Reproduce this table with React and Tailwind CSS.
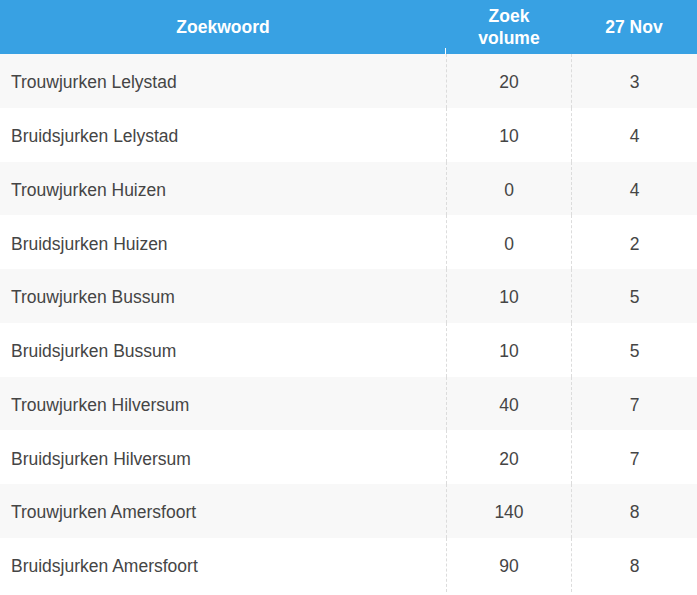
const ROWS = [
  ['Trouwjurken Lelystad', 20, 3],
  ['Bruidsjurken Lelystad', 10, 4],
  ['Trouwjurken Huizen', 0, 4],
  ['Bruidsjurken Huizen', 0, 2],
  ['Trouwjurken Bussum', 10, 5],
  ['Bruidsjurken Bussum', 10, 5],
  ['Trouwjurken Hilversum', 40, 7],
  ['Bruidsjurken Hilversum', 20, 7],
  ['Trouwjurken Amersfoort', 140, 8],
  ['Bruidsjurken Amersfoort', 90, 8],
];

export default function App() {
  return (
    <div className="w-[697px] h-[595px] bg-white font-['Liberation_Sans',Arial,sans-serif]">
      {/* header */}
      <div className="grid grid-cols-[446px_125px_1fr] h-[54px] bg-[#38a1e3] text-white font-bold text-[17.5px] leading-[22px]">
        <div className="relative flex items-center justify-center">
          Zoekwoord
          <span className="absolute right-0 bottom-0 w-px h-[6px] bg-white" />
        </div>
        <div className="flex items-center justify-center text-center pl-px">
          Zoek
          <br />
          volume
        </div>
        <div className="flex items-center justify-center">27 Nov</div>
      </div>

      {/* body */}
      {ROWS.map(([kw, vol, day], i) => (
        <div
          key={kw}
          className={`grid grid-cols-[446px_125px_1fr] h-[53.75px] text-[17.5px] text-[#454545] ${
            i % 2 === 0 ? 'bg-[#f8f8f8]' : 'bg-white'
          }`}
        >
          <div className="flex items-center pl-[11px] pt-[3px]">{kw}</div>
          <div className="flex items-center justify-center pt-[3px] border-l border-dashed border-[#dcdcdc]">
            {vol}
          </div>
          <div className="flex items-center justify-center pt-[3px] border-l border-dashed border-[#dcdcdc]">
            {day}
          </div>
        </div>
      ))}
    </div>
  );
}
